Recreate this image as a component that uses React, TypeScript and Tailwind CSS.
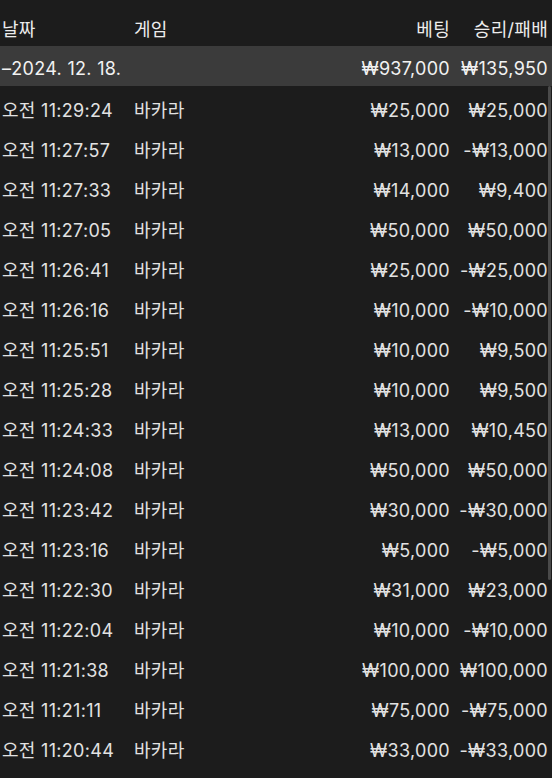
import React from "react";

type Row = { time: string; bet: string; result: string };

const rows: Row[] = [
  { time: "오전 11:29:24", bet: "₩25,000", result: "₩25,000" },
  { time: "오전 11:27:57", bet: "₩13,000", result: "-₩13,000" },
  { time: "오전 11:27:33", bet: "₩14,000", result: "₩9,400" },
  { time: "오전 11:27:05", bet: "₩50,000", result: "₩50,000" },
  { time: "오전 11:26:41", bet: "₩25,000", result: "-₩25,000" },
  { time: "오전 11:26:16", bet: "₩10,000", result: "-₩10,000" },
  { time: "오전 11:25:51", bet: "₩10,000", result: "₩9,500" },
  { time: "오전 11:25:28", bet: "₩10,000", result: "₩9,500" },
  { time: "오전 11:24:33", bet: "₩13,000", result: "₩10,450" },
  { time: "오전 11:24:08", bet: "₩50,000", result: "₩50,000" },
  { time: "오전 11:23:42", bet: "₩30,000", result: "-₩30,000" },
  { time: "오전 11:23:16", bet: "₩5,000", result: "-₩5,000" },
  { time: "오전 11:22:30", bet: "₩31,000", result: "₩23,000" },
  { time: "오전 11:22:04", bet: "₩10,000", result: "-₩10,000" },
  { time: "오전 11:21:38", bet: "₩100,000", result: "₩100,000" },
  { time: "오전 11:21:11", bet: "₩75,000", result: "-₩75,000" },
  { time: "오전 11:20:44", bet: "₩33,000", result: "-₩33,000" },
];

const grid = "grid grid-cols-[132px_1fr_120px_98px] items-center pl-[2px] pr-[4px]";

export default function App() {
  return (
    <div
      className="relative w-[552px] h-[778px] overflow-hidden bg-[#1c1c1c] text-[18px] tracking-[0.3px] text-[#e2e2e2]"
      style={{ fontFamily: "Inter, 'Noto Sans CJK KR', sans-serif" }}
    >
      {/* header */}
      <div className={`${grid} h-[46px] pt-[12px] text-[#ececec]`}>
        <span>날짜</span>
        <span>게임</span>
        <span className="text-right">베팅</span>
        <span className="text-right">승리/패배</span>
      </div>

      {/* day group */}
      <div className={`${grid} h-[40px] bg-[#3b3b3b] pt-[4px] text-[#f2f2f2]`}>
        <span className="col-span-2">–2024. 12. 18.</span>
        <span className="text-right whitespace-nowrap">₩937,000</span>
        <span className="text-right whitespace-nowrap">₩135,950</span>
      </div>

      {rows.map((r) => (
        <div key={r.time} className={`${grid} h-[40px] pt-[8px]`}>
          <span className="whitespace-nowrap">{r.time}</span>
          <span>바카라</span>
          <span className="text-right whitespace-nowrap">{r.bet}</span>
          <span className="text-right whitespace-nowrap">{r.result}</span>
        </div>
      ))}

      {/* overlay scrollbar */}
      <div className="absolute right-[1px] top-[86px] h-[494px] w-[3px] rounded-full bg-[#4a4a4a]" />
    </div>
  );
}
